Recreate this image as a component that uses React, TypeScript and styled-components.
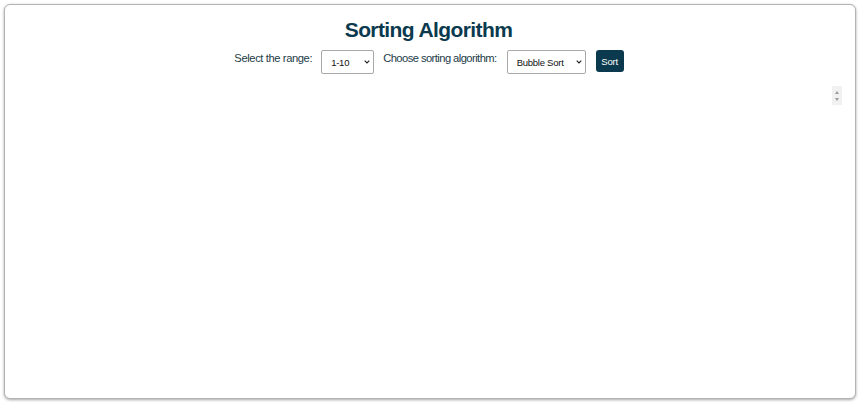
import React from "react";
import styled, { createGlobalStyle } from "styled-components";

const Global = createGlobalStyle`
  html, body { margin: 0; padding: 0; background: #ffffff; }
  body { font-family: "Liberation Sans", Arial, sans-serif; }
`;

const Frame = styled.div`
  box-sizing: border-box;
  margin: 4px;
  height: 395px;
  border: 1px solid #b3b3b3;
  border-radius: 6px;
  box-shadow: 0 1px 3px rgba(0, 0, 0, 0.35);
  background: #fff;
  display: flex;
  flex-direction: column;
  align-items: stretch;
`;

const Title = styled.h1`
  margin: 13px 0 0;
  text-align: center;
  font-size: 21px;
  line-height: 24px;
  font-weight: 700;
  letter-spacing: -0.6px;
  color: #0b3a4e;
  padding-right: 3px;
`;

const Controls = styled.div`
  display: flex;
  justify-content: center;
  align-items: flex-start;
  margin-top: 8px;
  padding-right: 2px;
`;

const Label = styled.label<{ $gap: number; $track: number }>`
  font-size: 11.2px;
  line-height: 14px;
  letter-spacing: ${(p) => p.$track}px;
  color: #233c48;
  margin-right: ${(p) => p.$gap}px;
  padding-top: 1px;
`;

const SelectWrap = styled.div<{ $w: number; $after: number }>`
  position: relative;
  width: ${(p) => p.$w}px;
  height: 24px;
  margin-right: ${(p) => p.$after}px;
`;

const Select = styled.select`
  appearance: none;
  -webkit-appearance: none;
  box-sizing: border-box;
  width: 100%;
  height: 100%;
  border: 1px solid #a9a9a9;
  border-radius: 2px;
  background: #fff;
  padding: 0 0 0 9px;
  font-family: "Liberation Sans", Arial, sans-serif;
  font-size: 9.5px;
  letter-spacing: -0.25px;
  color: #111;
  outline: none;
`;

const Chevron = styled.svg`
  position: absolute;
  right: 4px;
  top: 10px;
  width: 6px;
  height: 4px;
  pointer-events: none;
`;

const SortButton = styled.button`
  box-sizing: border-box;
  width: 28px;
  height: 22px;
  border: none;
  border-radius: 3px;
  background: #0b3a4e;
  color: #fff;
  font-family: "Liberation Sans", Arial, sans-serif;
  font-size: 9.5px;
  letter-spacing: -0.2px;
  padding: 0;
  cursor: pointer;
`;

const SpinRow = styled.div`
  display: flex;
  justify-content: flex-end;
  padding-right: 13px;
  margin-top: 12px;
`;

const Spinner = styled.div`
  width: 10px;
  height: 19px;
  background: #f1f1f1;
  display: flex;
  flex-direction: column;
  align-items: center;
  justify-content: center;
  gap: 4px;
`;

const Tri = styled.div<{ $up?: boolean }>`
  width: 0;
  height: 0;
  border-left: 2.5px solid transparent;
  border-right: 2.5px solid transparent;
  ${(p) =>
    p.$up
      ? "border-bottom: 3px solid #9a9a9a;"
      : "border-top: 3px solid #9a9a9a;"}
`;

const ChevronIcon = () => (
  <Chevron viewBox="0 0 6 4">
    <path d="M0.7 0.7 L3 3 L5.3 0.7" fill="none" stroke="#222" strokeWidth="1.1" />
  </Chevron>
);

export default function App() {
  return (
    <>
      <Global />
      <Frame>
        <Title>Sorting Algorithm</Title>
        <Controls>
          <Label $gap={9} $track={-0.4}>Select the range:</Label>
          <SelectWrap $w={53} $after={9}>
            <Select defaultValue="1-10">
              <option value="1-10">1-10</option>
              <option value="1-50">1-50</option>
              <option value="1-100">1-100</option>
            </Select>
            <ChevronIcon />
          </SelectWrap>
          <Label $gap={10} $track={-0.56}>Choose sorting algorithm:</Label>
          <SelectWrap $w={79} $after={10}>
            <Select defaultValue="bubble">
              <option value="bubble">Bubble Sort</option>
              <option value="selection">Selection Sort</option>
              <option value="insertion">Insertion Sort</option>
            </Select>
            <ChevronIcon />
          </SelectWrap>
          <SortButton>Sort</SortButton>
        </Controls>
        <SpinRow>
          <Spinner>
            <Tri $up />
            <Tri />
          </Spinner>
        </SpinRow>
      </Frame>
    </>
  );
}
